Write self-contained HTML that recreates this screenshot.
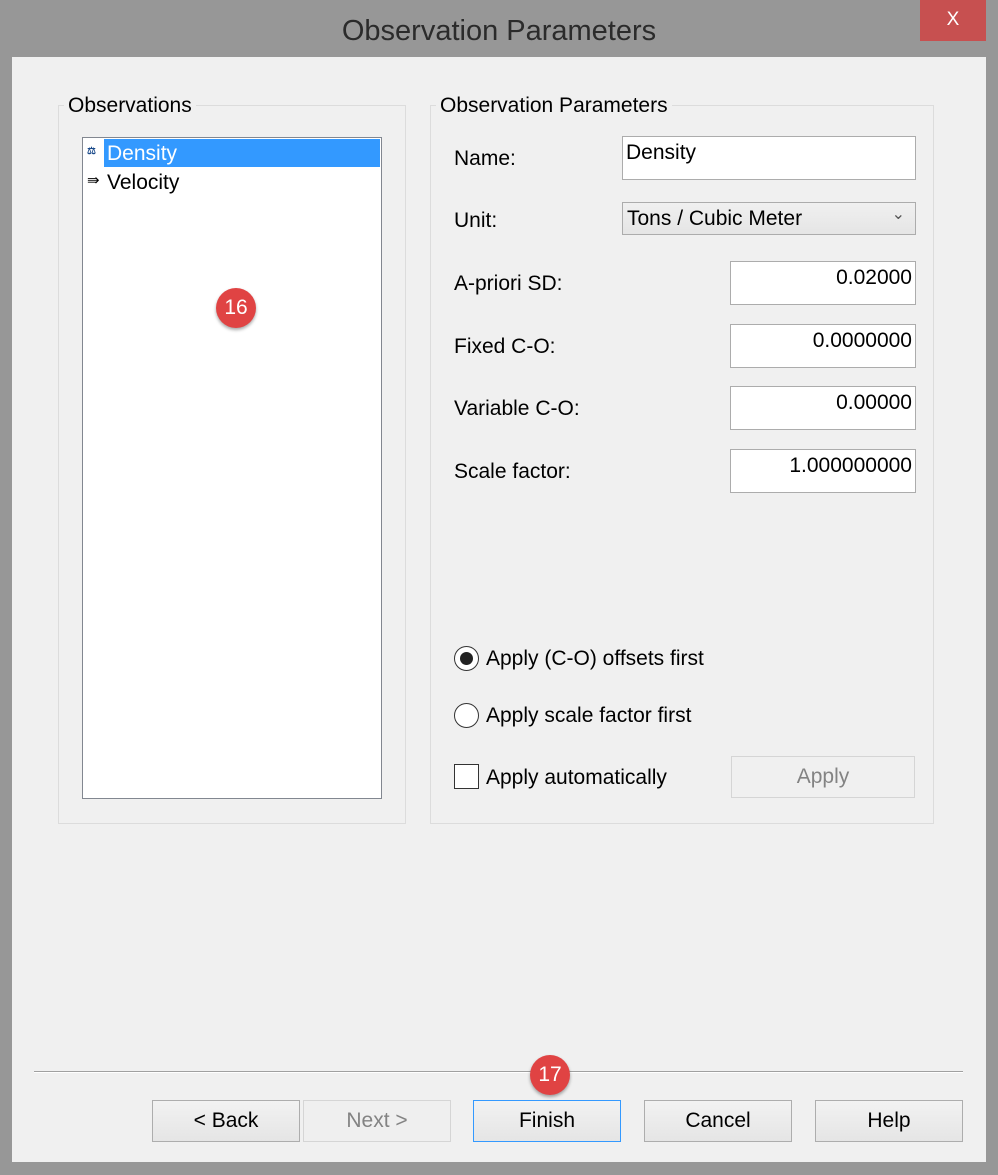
<!DOCTYPE html>
<html><head><style>
*{margin:0;padding:0;box-sizing:border-box}
body{width:998px;height:1175px;background:#979797;position:relative;font-family:"Liberation Sans",Arial,sans-serif;overflow:hidden;color:#000}
.a{position:absolute}
.t{font-size:21px;line-height:1}
.inp{position:absolute;background:#fff;border:1px solid #acacac;font-size:21px;padding:5px 3px;line-height:1}
.btn{position:absolute;border:1px solid #adadad;background:linear-gradient(#f2f2f2,#e5e5e5);font-size:21px;display:flex;align-items:center;justify-content:center}
.grp{position:absolute;border:1px solid #dcdcdc}
.badge{position:absolute;width:40px;height:40px;border-radius:50%;background:#e04343;color:#fff;font-size:21px;display:flex;align-items:center;justify-content:center;box-shadow:0 2px 3px rgba(0,0,0,.35)}
</style></head><body>
<div class="a" style="left:0;top:0;width:998px;height:57px;text-align:center;font-size:29px;line-height:62px;color:#2b2b2b">Observation Parameters</div>
<div class="a" style="left:920px;top:0;width:66px;height:41px;background:#c75050;color:#fff;font-size:19px;text-align:center;line-height:40px">X</div>
<div class="a" style="left:12px;top:57px;width:974px;height:1105px;background:#f0f0f0"></div>

<div class="grp" style="left:58px;top:105px;width:348px;height:719px"></div>
<div class="a t" style="left:64px;top:95px;background:#f0f0f0;padding:0 4px">Observations</div>
<div class="a" style="left:82px;top:137px;width:300px;height:662px;background:#fff;border:1px solid #828790"></div>
<div class="a" style="left:104px;top:139px;width:276px;height:28px;background:#3399ff"></div>
<div class="a t" style="left:107px;top:143px;color:#fff">Density</div>
<div class="a" style="left:87px;top:147px;width:16px;height:10px;font-size:10px;color:#1a4a8a;font-weight:bold;line-height:10px">⚖</div>
<div class="a t" style="left:87px;top:173px;font-size:15px">⇛</div>
<div class="a t" style="left:107px;top:172px">Velocity</div>
<div class="badge" style="left:216px;top:288px">16</div>

<div class="grp" style="left:430px;top:105px;width:504px;height:719px"></div>
<div class="a t" style="left:436px;top:95px;background:#f0f0f0;padding:0 4px">Observation Parameters</div>
<div class="a t" style="left:454px;top:148px">Name:</div>
<div class="inp" style="left:622px;top:136px;width:294px;height:44px">Density</div>
<div class="a t" style="left:454px;top:210px">Unit:</div>
<div class="a" style="left:622px;top:202px;width:294px;height:33px;border:1px solid #acacac;background:linear-gradient(#f0f0f0,#e5e5e5);font-size:21px;padding:5px 4px;line-height:1">Tons / Cubic Meter<span style="position:absolute;right:10px;top:4px;font-size:16px;color:#555">⌄</span></div>
<div class="a t" style="left:454px;top:273px">A-priori SD:</div>
<div class="inp" style="left:730px;top:261px;width:186px;height:44px;text-align:right">0.02000</div>
<div class="a t" style="left:454px;top:336px">Fixed C-O:</div>
<div class="inp" style="left:730px;top:324px;width:186px;height:44px;text-align:right">0.0000000</div>
<div class="a t" style="left:454px;top:398px">Variable C-O:</div>
<div class="inp" style="left:730px;top:386px;width:186px;height:44px;text-align:right">0.00000</div>
<div class="a t" style="left:454px;top:461px">Scale factor:</div>
<div class="inp" style="left:730px;top:449px;width:186px;height:44px;text-align:right">1.000000000</div>

<div class="a" style="left:454px;top:646px;width:25px;height:25px;border-radius:50%;border:1px solid #333;background:#fff"></div>
<div class="a" style="left:460px;top:652px;width:13px;height:13px;border-radius:50%;background:#222"></div>
<div class="a t" style="left:486px;top:648px">Apply (C-O) offsets first</div>
<div class="a" style="left:454px;top:703px;width:25px;height:25px;border-radius:50%;border:1px solid #333;background:#fff"></div>
<div class="a t" style="left:486px;top:705px">Apply scale factor first</div>
<div class="a" style="left:454px;top:764px;width:25px;height:25px;border:1px solid #333;background:#fff"></div>
<div class="a t" style="left:486px;top:767px">Apply automatically</div>
<div class="btn" style="left:731px;top:756px;width:184px;height:42px;background:#f0f0f0;border-color:#d5d5d5;color:#838383">Apply</div>

<div class="a" style="left:34px;top:1071px;width:929px;height:1px;background:#a0a0a0"></div>
<div class="a" style="left:34px;top:1072px;width:929px;height:1px;background:#fff"></div>
<div class="btn" style="left:152px;top:1100px;width:148px;height:42px">&lt; Back</div>
<div class="btn" style="left:303px;top:1100px;width:148px;height:42px;background:#efefef;border-color:#d5d5d5;color:#838383">Next &gt;</div>
<div class="btn" style="left:473px;top:1100px;width:148px;height:42px;border-color:#3399ff">Finish</div>
<div class="btn" style="left:644px;top:1100px;width:148px;height:42px">Cancel</div>
<div class="btn" style="left:815px;top:1100px;width:148px;height:42px">Help</div>
<div class="badge" style="left:530px;top:1055px">17</div>
</body></html>
